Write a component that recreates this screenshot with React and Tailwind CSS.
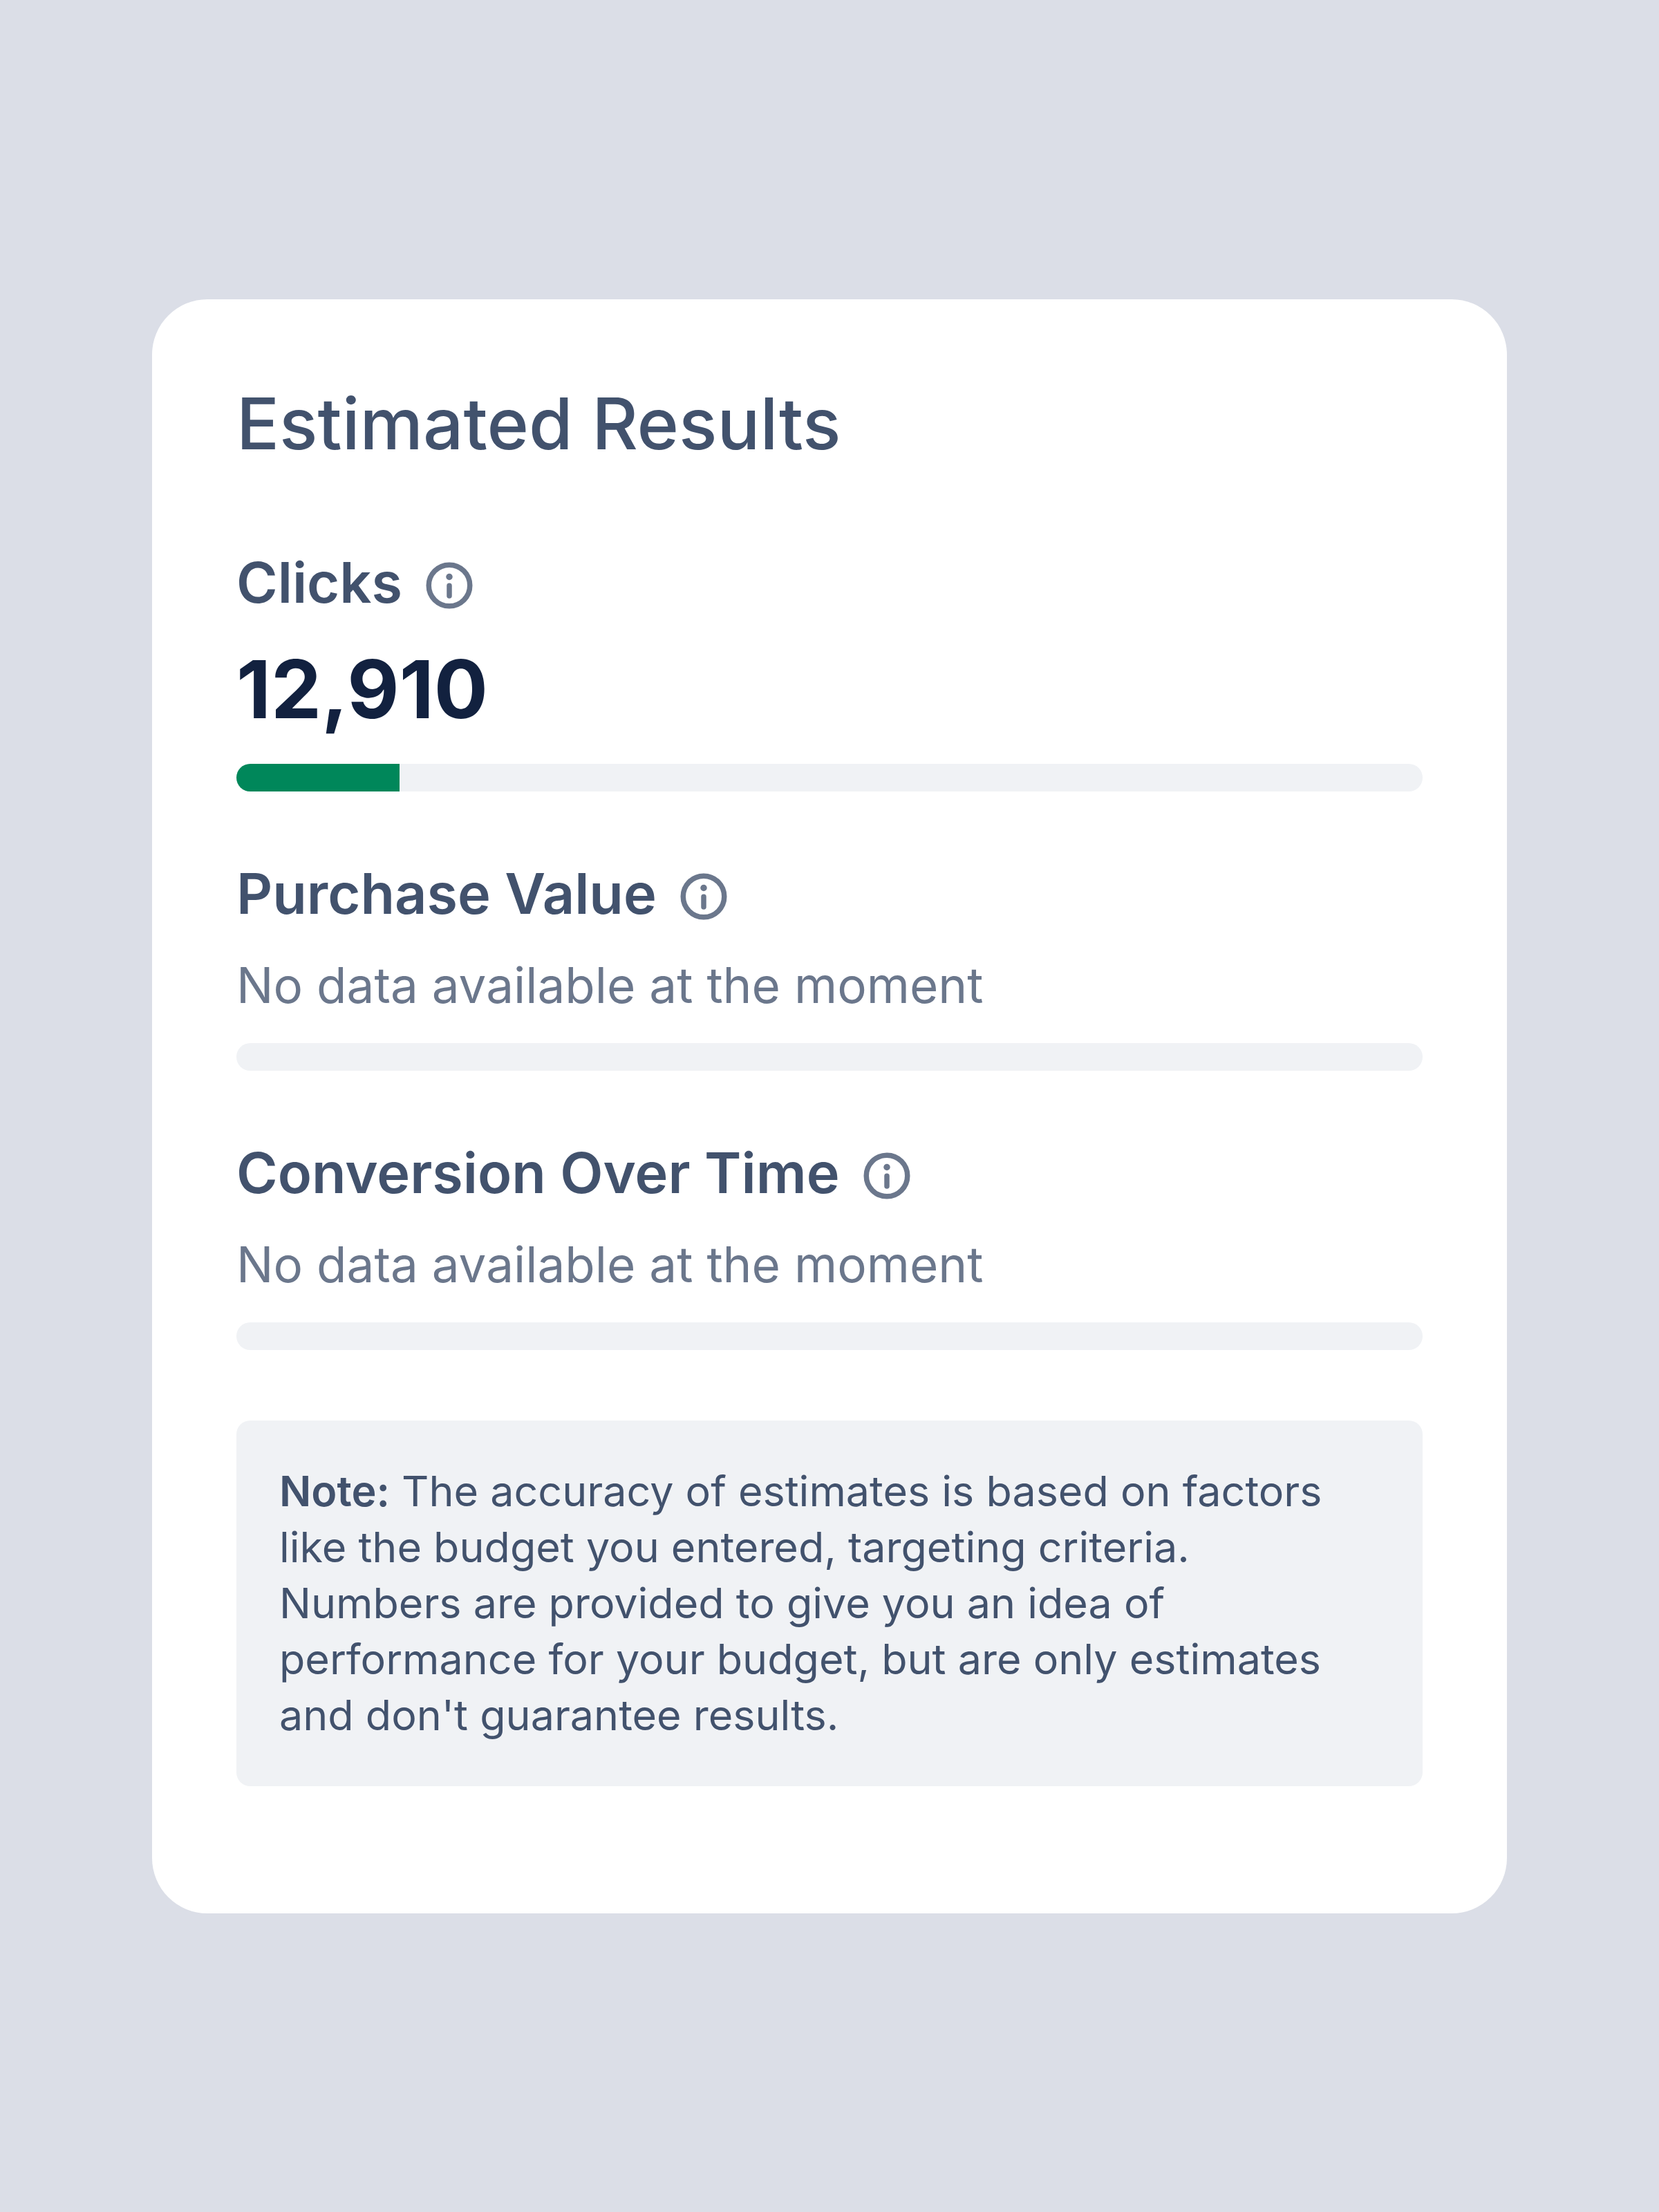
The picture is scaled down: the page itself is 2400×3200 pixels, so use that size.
import { useId } from "react";

const METRICS = [
  { name: "Clicks", value: "12,910", percent: 13.75 },
  { name: "Purchase Value", value: null, percent: 0 },
  { name: "Conversion Over Time", value: null, percent: 0 },
];

const InfoIcon = () => (
  <svg className="w-[72px] h-[72px]" viewBox="0 0 72 72" fill="none" aria-hidden="true">
    <circle cx="36" cy="36" r="29.75" stroke="currentColor" strokeWidth="7.5" />
    <circle cx="36" cy="23.5" r="4.75" fill="currentColor" />
    <path d="M36 36.3v14.6" stroke="currentColor" strokeWidth="7.5" strokeLinecap="round" />
  </svg>
);

// One metric: label with info button, value (or empty text) and progress bar
const Metric = ({ name, value, percent }) => {
  const id = useId();

  return (
    <section aria-labelledby={id}>
      <div className="flex items-center gap-8">
        <h2 id={id} className="text-[81px] leading-[100px] font-semibold text-[#42526d]">
          {name}
        </h2>
        <button type="button" aria-label={`About ${name}`} className="mt-2 text-[#6b778c]">
          <InfoIcon />
        </button>
      </div>
      {value ? (
        <p className="mt-9 text-[116px] leading-[136px] font-bold text-[#12213f]">{value}</p>
      ) : (
        <p className="mt-[38px] text-[71px] leading-[88px] text-[#6b778c]">
          No data available at the moment
        </p>
      )}
      <div className="mt-10 h-10 rounded-full bg-[#f0f2f5] overflow-hidden">
        <div className="h-full bg-[#00875a]" style={{ width: `${percent}%` }} />
      </div>
    </section>
  );
};

const App = () => (
  <main className="min-h-screen flex items-center justify-center bg-[#dbdee7] px-[220px] font-['Inter',sans-serif]">
    <div className="w-full rounded-[80px] bg-white px-[122px] pt-[118px] pb-[184px]">
      <h1 className="text-[103px] leading-[124px] font-medium text-[#42526d]">Estimated Results</h1>
      <div className="mt-[118px] flex flex-col gap-[98px]">
        {METRICS.map((metric) => (
          <Metric key={metric.name} {...metric} />
        ))}
      </div>
      <p className="mt-[102px] rounded-[20px] bg-[#f0f2f5] p-[62px] text-[61px] leading-[81px] text-[#42526d]">
        <strong className="font-semibold">Note:</strong> The accuracy of estimates is based on factors
        like the budget you entered, targeting criteria. Numbers are provided to give you an idea of
        performance for your budget, but are only estimates and don't guarantee results.
      </p>
    </div>
  </main>
);

export default App;
